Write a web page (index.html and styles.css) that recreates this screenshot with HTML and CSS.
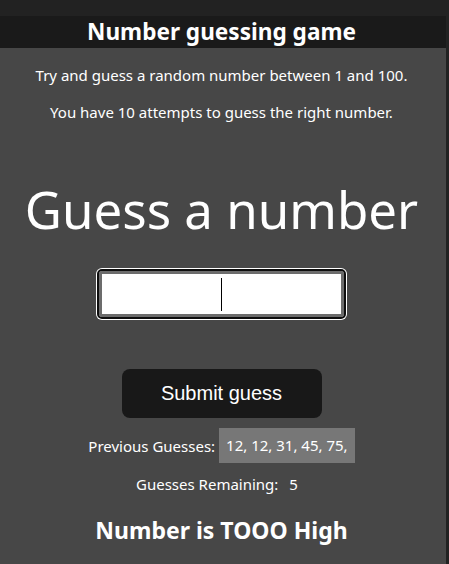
FILE: index.html
```html
<!DOCTYPE html>
<html lang="en">
<head>
<meta charset="utf-8">
<title>Number guessing game</title>
<link rel="stylesheet" href="styles.css">
</head>
<body>
<main class="app">
  <header class="bar"><h1 class="title">Number guessing game</h1></header>
  <p class="intro intro-first">Try and guess a random number between 1 and 100.</p>
  <p class="intro">You have 10 attempts to guess the right number.</p>
  <h2 class="prompt">Guess a number</h2>
  <div class="field">
    <input class="guess-input" type="number" aria-label="Enter a guess">
    <span class="caret"></span>
  </div>
  <button class="submit" type="button">Submit guess</button>
  <div class="row prev">
    <span class="label">Previous Guesses:</span>
    <span class="guesses">12, 12, 31, 45, 75,</span>
  </div>
  <div class="row remain">
    <span class="label">Guesses Remaining:</span>
    <span class="count">5</span>
  </div>
  <h3 class="result">Number is TOOO High</h3>
</main>
</body>
</html>
```
FILE: styles.css
```css
html, body {
  margin: 0;
  padding: 0;
  background: #222222;
  height: 100%;
  overflow: hidden;
}
body {
  font-family: "Noto Sans", "Open Sans", sans-serif;
  color: #ffffff;
}
.app {
  box-sizing: border-box;
  margin-top: 16px;
  width: 446px;
  min-height: 548px;
  padding-right: 3px;
  background: #474747;
  display: flex;
  flex-direction: column;
  align-items: center;
}
.bar {
  width: 446px;
  margin-right: -3px;
  height: 32px;
  background: #1a1a1a;
  display: flex;
  align-items: center;
  justify-content: center;
}
.title {
  margin: 0 3px 0 0;
  font-size: 22.6px;
  font-weight: 700;
  line-height: 32px;
}
.intro {
  margin: 0;
  font-size: 15px;
  line-height: 20px;
}
.intro-first { margin-top: 17px; }
.intro + .intro { margin-top: 17px; }
.prompt {
  margin: 52px 0 0;
  font-size: 51px;
  font-weight: 400;
  line-height: 70px;
}
.field {
  position: relative;
  margin-top: 27px;
  width: 245px;
  height: 46px;
}
.guess-input {
  box-sizing: border-box;
  width: 245px;
  height: 46px;
  border: 3px solid #6c6c6c;
  border-radius: 3px;
  background: #ffffff;
  outline: 2px solid #0e0e0e;
  outline-offset: 0;
  box-shadow: 0 0 0 3px #ffffff;
  text-align: center;
  font-size: 20px;
  padding: 0;
  margin: 0;
  caret-color: transparent;
}
.caret {
  position: absolute;
  left: 122px;
  top: 7px;
  width: 1px;
  height: 33px;
  background: #000000;
}
.submit {
  margin-top: 52px;
  width: 200px;
  height: 49px;
  border: 0;
  border-radius: 8px;
  background: #181818;
  color: #ffffff;
  font-family: "Liberation Sans", Arial, sans-serif;
  font-size: 20px;
}
.row {
  display: flex;
  align-items: center;
  font-size: 15px;
}
.prev { margin-top: 10px; }
.prev .label { margin-right: 4px; }
.guesses {
  background: #777777;
  height: 35px;
  line-height: 35px;
  padding: 0 7px;
}
.remain { margin-top: 11px; line-height: 20px; }
.remain .label { margin-right: 11px; }
.remain .count { margin-right: 9px; }
.result {
  margin: 21px 0 0;
  font-size: 23px;
  font-weight: 700;
  line-height: 30px;
}
```
